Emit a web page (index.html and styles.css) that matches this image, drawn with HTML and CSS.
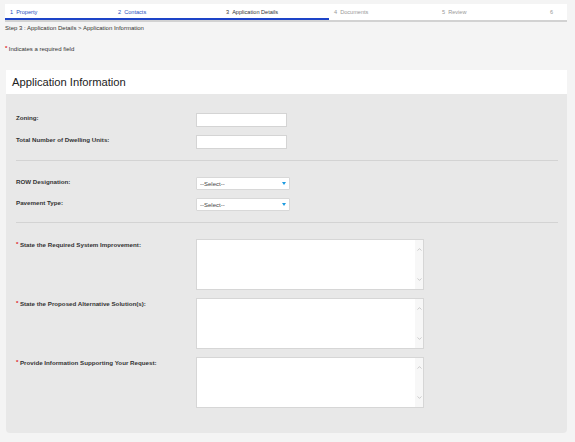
FILE: index.html
```html
<!DOCTYPE html>
<html lang="en">
<head>
    <meta charset="UTF-8">
    <meta name="viewport" content="width=device-width, initial-scale=1.0">
    <title>Application Details</title>
    <link rel="stylesheet" href="styles.css">
</head>
<body>

    <!-- Wizard steps -->
    <ul class="steps">
        <li class="done"><span class="num">1</span>Property</li>
        <li class="done"><span class="num">2</span>Contacts</li>
        <li class="current"><span class="num">3</span>Application Details</li>
        <li><span class="num">4</span>Documents</li>
        <li><span class="num">5</span>Review</li>
        <li><span class="num">6</span></li>
    </ul>

    <div class="crumb">Step 3 : Application Details &gt; Application Information</div>

    <p class="req-note"><span class="req">*</span>Indicates a required field</p>

    <div class="card">
        <div class="card-head">
            <h2>Application Information</h2>
        </div>
        <div class="card-body">
            <div class="group">
                <div class="row">
                    <label>Zoning:</label>
                    <input type="text" class="text-input">
                </div>
                <div class="row">
                    <label>Total Number of Dwelling Units:</label>
                    <input type="text" class="text-input">
                </div>
            </div>

            <hr>

            <div class="group">
                <div class="row">
                    <label>ROW Designation:</label>
                    <span class="select-wrap">
                        <select><option>--Select--</option></select>
                    </span>
                </div>
                <div class="row">
                    <label>Pavement Type:</label>
                    <span class="select-wrap">
                        <select><option>--Select--</option></select>
                    </span>
                </div>
            </div>

            <hr>

            <div class="group">
                <div class="row">
                    <label><span class="req">*</span>State the Required System Improvement:</label>
                    <div class="area">
                        <textarea></textarea>
                        <div class="scroll">
                            <svg width="5" height="3" viewBox="0 0 5 3"><path d="M0.5 2.6 L2.5 0.6 L4.5 2.6" fill="none" stroke="#b9b9b9" stroke-width="0.7"/></svg>
                            <svg width="5" height="3" viewBox="0 0 5 3"><path d="M0.5 0.4 L2.5 2.4 L4.5 0.4" fill="none" stroke="#b9b9b9" stroke-width="0.7"/></svg>
                        </div>
                    </div>
                </div>
                <div class="row">
                    <label><span class="req">*</span>State the Proposed Alternative Solution(s):</label>
                    <div class="area">
                        <textarea></textarea>
                        <div class="scroll">
                            <svg width="5" height="3" viewBox="0 0 5 3"><path d="M0.5 2.6 L2.5 0.6 L4.5 2.6" fill="none" stroke="#b9b9b9" stroke-width="0.7"/></svg>
                            <svg width="5" height="3" viewBox="0 0 5 3"><path d="M0.5 0.4 L2.5 2.4 L4.5 0.4" fill="none" stroke="#b9b9b9" stroke-width="0.7"/></svg>
                        </div>
                    </div>
                </div>
                <div class="row">
                    <label><span class="req">*</span>Provide Information Supporting Your Request:</label>
                    <div class="area">
                        <textarea></textarea>
                        <div class="scroll">
                            <svg width="5" height="3" viewBox="0 0 5 3"><path d="M0.5 2.6 L2.5 0.6 L4.5 2.6" fill="none" stroke="#b9b9b9" stroke-width="0.7"/></svg>
                            <svg width="5" height="3" viewBox="0 0 5 3"><path d="M0.5 0.4 L2.5 2.4 L4.5 0.4" fill="none" stroke="#b9b9b9" stroke-width="0.7"/></svg>
                        </div>
                    </div>
                </div>
            </div>
        </div>
    </div>

</body>
</html>
```

FILE: styles.css
```css
body {
    font-family: "Liberation Sans", Arial, sans-serif;
    background-color: #f4f4f4;
    margin: 0;
    padding: 4px 8px 10px 5px;
    color: #333;
    font-size: 6px;
}
.steps {
    list-style: none;
    display: flex;
    margin: 0;
    padding: 0;
    height: 16px;
    background: white;
    border-bottom: 2px solid #d2d2d2;
    overflow: hidden;
}
.steps li {
    flex: 0 0 108px;
    box-sizing: border-box;
    padding-left: 5px;
    line-height: 16px;
    font-size: 5.6px;
    color: #999;
}
.steps li .num {
    margin-right: 3px;
}
.steps li.done {
    color: #1d4fc0;
}
.steps li.current {
    color: #333;
}
.steps li.done,
.steps li.current {
    height: 16px;
    border-bottom: 2px solid #1d44c8;
}
.crumb {
    margin-top: 2px;
    line-height: 8px;
    font-size: 6px;
    color: #333;
}
.req-note {
    margin: 12px 0 0 0;
    line-height: 8px;
    font-size: 6px;
    color: #333;
}
.req {
    color: #e0231f;
    font-weight: bold;
    margin-right: 1.5px;
    vertical-align: 1px;
}
.card {
    margin: 17px 0 0 1px;
}
.card-head {
    background: white;
    height: 24px;
    display: flex;
    align-items: center;
    padding-left: 6px;
}
.card-head h2 {
    margin: 0;
    font-size: 11.2px;
    font-weight: normal;
    color: #222;
}
.card-body {
    background: #e8e8e8;
    padding: 19px 9px 25px 10px;
    border-radius: 0 0 4px 4px;
}
.group {
    display: flex;
    flex-direction: column;
    gap: 8px;
}
.row {
    display: grid;
    grid-template-columns: 180px auto;
    align-items: start;
}
.row label {
    padding-top: 1px;
    line-height: 8px;
    font-weight: bold;
    font-size: 6.2px;
    color: #333;
}
.text-input {
    box-sizing: border-box;
    width: 91px;
    height: 14px;
    margin: 0;
    border: 1px solid #d4d4d4;
    background: white;
    outline: none;
}
hr {
    border: none;
    border-top: 1px solid #d3d3d3;
    margin: 11px 0 16px 0;
}
.select-wrap {
    position: relative;
    display: inline-block;
    width: 94px;
}
.select-wrap select {
    appearance: none;
    -webkit-appearance: none;
    box-sizing: border-box;
    width: 94px;
    height: 13px;
    margin: 0;
    padding: 0 0 0 3px;
    border: 1px solid #d8d8d8;
    border-radius: 1px;
    background: white;
    font-family: "Liberation Sans", Arial, sans-serif;
    font-size: 6px;
    color: #444;
    outline: none;
}
.select-wrap::after {
    content: "";
    position: absolute;
    right: 4px;
    top: 5px;
    border-left: 2.5px solid transparent;
    border-right: 2.5px solid transparent;
    border-top: 3px solid #1b9ae0;
}
.area {
    display: flex;
    width: 228px;
    height: 51px;
    box-sizing: border-box;
    border: 1px solid #d6d6d6;
    background: white;
}
.area textarea {
    flex: 1;
    border: none;
    resize: none;
    outline: none;
    margin: 0;
    padding: 0;
    background: white;
}
.scroll {
    width: 8px;
    background: #f7f7f7;
    display: flex;
    flex-direction: column;
    justify-content: space-between;
    align-items: center;
    padding: 8px 0 8px 0;
}
```
